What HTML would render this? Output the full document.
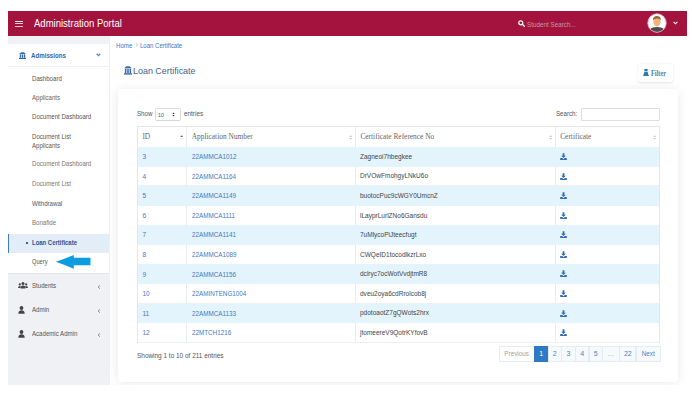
<!DOCTYPE html>
<html><head><meta charset="utf-8">
<style>
*{box-sizing:border-box;margin:0;padding:0}
html,body{width:692px;height:401px;overflow:hidden;background:#fff;position:relative;font-family:"Liberation Sans",sans-serif}
.a{position:absolute;white-space:nowrap}
.sx{transform-origin:0 0;display:inline-block}
#hdr{left:8px;top:11px;width:679px;height:25.4px;background:#a3133e}
#sb{left:8px;top:36px;width:101.5px;height:348.5px;background:#eff1f5}
.sbw{position:absolute;left:0;width:101.5px;background:#fff}
.sub{position:absolute;left:23.7px;font-size:7px;color:#4a4a4a;line-height:8px}
.clip{left:109.5px;top:36px;width:577.5px;height:348.7px;overflow:hidden}
.card{left:8.8px;top:53px;width:559.9px;height:292.5px;background:#fff;border-radius:4px;box-shadow:0 1px 12px rgba(0,0,0,0.09)}
.th{position:absolute;font-family:"Liberation Serif",serif;font-size:7.4px;color:#666;line-height:8px}
.td{position:absolute;font-size:6.5px;line-height:8px}
.pg{position:absolute;top:346.3px;height:15.3px;border:0.6px solid #e3ebf4;font-size:7px;color:#3a75c0;line-height:14px;text-align:center;overflow:hidden}
</style></head><body>
<!-- header -->
<div id="hdr" class="a">
  <div class="a" style="left:7.3px;top:10px;width:8px;height:1px;background:#f7e6eb"></div>
  <div class="a" style="left:7.3px;top:12px;width:8px;height:1px;background:#eccad4"></div>
  <div class="a" style="left:7.3px;top:15px;width:8px;height:1px;background:#eccad4"></div>
  <div class="a" style="left:25.8px;top:4.8px;font-size:11px;color:#fff;line-height:14px"><span class="sx" style="transform:scaleX(0.865)">Administration Portal</span></div>
  <svg class="a" style="left:509.5px;top:9px" width="7" height="7" viewBox="0 0 7 7"><circle cx="2.8" cy="2.8" r="2" fill="none" stroke="#fff" stroke-width="1.2"/><path d="M4.3 4.3L6.3 6.3" stroke="#fff" stroke-width="1.4" stroke-linecap="round"/></svg>
  <div class="a" style="left:519.2px;top:10px;font-size:7.5px;color:#c29aa8;line-height:8px"><span class="sx" style="transform:scaleX(0.84)">Student Search...</span></div>
  <svg class="a" style="left:639px;top:2.1px" width="20" height="20" viewBox="0 0 20 20">
    <defs><clipPath id="cc"><circle cx="10" cy="10" r="8.9"/></clipPath></defs>
    <circle cx="10" cy="10" r="9.2" fill="#fff" stroke="#e9b8c5" stroke-width="0.9"/>
    <g clip-path="url(#cc)">
      <ellipse cx="10" cy="17.6" rx="7.6" ry="3.6" fill="#4e4e4e"/>
      <ellipse cx="10" cy="8.8" rx="3.6" ry="4.6" fill="#f1b27c"/>
      <path d="M5.9 7.2Q5.8 3.3 9.8 3.1Q14 3.1 14 7Q13.2 5.6 10.4 5.4Q7.6 5.2 5.9 7.2Z" fill="#8d6c3c"/>
    </g>
  </svg>
  <svg class="a" style="left:665.3px;top:10.3px" width="5" height="4" viewBox="0 0 5 4"><path d="M0.6 0.9L2.5 2.8L4.4 0.9" fill="none" stroke="#fff" stroke-width="1.1"/></svg>
</div>

<!-- sidebar -->
<div id="sb" class="a">
  <div class="sbw" style="top:7.5px;height:23.3px;border-bottom:0.6px solid #eceef2"></div>
  <div class="sbw" style="top:30.8px;height:207.4px;border-bottom:0.8px solid #e3e6ec"></div>
  <!-- admissions -->
  <svg class="a" style="left:10.8px;top:15.8px" width="7" height="7" viewBox="0 0 8 8"><path d="M0.2 2.3L2 0.6Q4 -0.1 6 0.6L7.8 2.3Z" fill="#3465a5"/><rect x="0.9" y="2.7" width="1.5" height="3.9" fill="#3465a5"/><rect x="3.25" y="2.7" width="1.5" height="3.9" fill="#3465a5"/><rect x="5.6" y="2.7" width="1.5" height="3.9" fill="#3465a5"/><rect x="0" y="6.7" width="8" height="1.3" fill="#3465a5"/></svg>
  <div class="a" style="left:23.3px;top:15.5px;font-size:7px;font-weight:bold;color:#3465a5;line-height:8px"><span class="sx" style="transform:scaleX(0.88)">Admissions</span></div>
  <svg class="a" style="left:87.8px;top:17.2px" width="5" height="3.6" viewBox="0 0 5 3.6"><path d="M0.7 0.8L2.5 2.6L4.3 0.8" fill="none" stroke="#5b8cc6" stroke-width="1.3"/></svg>

  <div class="sub" style="top:38.6px;color:#555"><span class="sx" style="transform:scaleX(0.87)">Dashboard</span></div>
  <div class="sub" style="top:57.7px;color:#666"><span class="sx" style="transform:scaleX(0.87)">Applicants</span></div>
  <div class="sub" style="top:77px;color:#555"><span class="sx" style="transform:scaleX(0.87)">Document Dashboard</span></div>
  <div class="sub" style="top:97px;color:#555"><span class="sx" style="transform:scaleX(0.87)">Document List</span></div>
  <div class="sub" style="top:105.5px;color:#5a5a5a"><span class="sx" style="transform:scaleX(0.87)">Applicants</span></div>
  <div class="sub" style="top:124.1px;color:#777"><span class="sx" style="transform:scaleX(0.87)">Document Dashboard</span></div>
  <div class="sub" style="top:144.4px;color:#777"><span class="sx" style="transform:scaleX(0.87)">Document List</span></div>
  <div class="sub" style="top:164px;color:#555"><span class="sx" style="transform:scaleX(0.87)">Withdrawal</span></div>
  <div class="sub" style="top:183.1px;color:#777"><span class="sx" style="transform:scaleX(0.87)">Bonafide</span></div>
  <!-- active -->
  <div class="a" style="left:0;top:197.6px;width:101.5px;height:19.4px;background:#e3edf7;border-left:1.6px solid #3d7cc9"></div>
  <div class="a" style="left:17.9px;top:206.2px;width:2.1px;height:2.1px;background:#2a5590;border-radius:0.5px"></div>
  <div class="a" style="left:24.3px;top:202.6px;font-size:7px;font-weight:bold;color:#2a5590;line-height:8px"><span class="sx" style="transform:scaleX(0.85)">Loan Certificate</span></div>
  <div class="sub" style="top:222.3px;font-size:6.4px;color:#555"><span class="sx" style="transform:scaleX(0.89)">Query</span></div>
  <!-- arrow -->
  <svg class="a" style="left:47px;top:218px" width="36" height="16" viewBox="0 0 36 16"><path d="M0.8 7.8Q10 4.5 18.8 0.9V3.7H35.5V11.3H18.8V14.7Q10 11.1 0.8 7.8Z" fill="#0b9ddf"/></svg>

  <!-- bottom items -->
  <svg class="a" style="left:10.4px;top:246px" width="10" height="7" viewBox="0 0 10 7"><circle cx="5" cy="1.6" r="1.5" fill="#444"/><path d="M2.5 6.5Q2.5 3.6 5 3.6Q7.5 3.6 7.5 6.5Z" fill="#444"/><circle cx="1.8" cy="2.4" r="1.1" fill="#444"/><circle cx="8.2" cy="2.4" r="1.1" fill="#444"/><path d="M0 6Q0 4 1.8 4Q2.6 4 2.9 4.5L2.3 6Z" fill="#444"/><path d="M10 6Q10 4 8.2 4Q7.4 4 7.1 4.5L7.7 6Z" fill="#444"/></svg>
  <div class="sub" style="left:23.6px;top:246px;color:#555"><span class="sx" style="transform:scaleX(0.87)">Students</span></div>
  <svg class="a" style="left:89px;top:248.5px" width="4" height="4" viewBox="0 0 4 4"><path d="M3 0.3L1 2L3 3.7" fill="none" stroke="#8a8a8a" stroke-width="0.9"/></svg>

  <svg class="a" style="left:10.2px;top:269.6px" width="7" height="8" viewBox="0 0 7 8"><circle cx="3.5" cy="2" r="1.9" fill="#444"/><path d="M0.3 7.8Q0.3 4.3 3.5 4.3Q6.7 4.3 6.7 7.8Z" fill="#444"/></svg>
  <div class="sub" style="left:23.6px;top:270px;color:#555"><span class="sx" style="transform:scaleX(0.87)">Admin</span></div>
  <svg class="a" style="left:89px;top:272.5px" width="4" height="4" viewBox="0 0 4 4"><path d="M3 0.3L1 2L3 3.7" fill="none" stroke="#8a8a8a" stroke-width="0.9"/></svg>

  <svg class="a" style="left:10.2px;top:293.6px" width="7" height="8" viewBox="0 0 7 8"><circle cx="3.5" cy="2" r="1.9" fill="#444"/><path d="M0.3 7.8Q0.3 4.3 3.5 4.3Q6.7 4.3 6.7 7.8Z" fill="#444"/></svg>
  <div class="sub" style="left:23.6px;top:294px;color:#555"><span class="sx" style="transform:scaleX(0.87)">Academic Admin</span></div>
  <svg class="a" style="left:89px;top:296.5px" width="4" height="4" viewBox="0 0 4 4"><path d="M3 0.3L1 2L3 3.7" fill="none" stroke="#8a8a8a" stroke-width="0.9"/></svg>
</div>
<div class="a" style="left:109.4px;top:36px;width:0.8px;height:348.5px;background:#efefef"></div>

<!-- main -->
<div class="a" style="left:116.2px;top:41.5px;font-size:6.7px;color:#4577c0;line-height:8px"><span class="sx" style="transform:scaleX(0.92)">Home</span></div>
<svg class="a" style="left:135.5px;top:43.2px" width="2" height="4" viewBox="0 0 2 4"><path d="M0.4 0.4L1.5 2L0.4 3.6" fill="none" stroke="#aaa" stroke-width="0.7"/></svg>
<div class="a" style="left:139.6px;top:41.5px;font-size:6.7px;color:#4577c0;line-height:8px"><span class="sx" style="transform:scaleX(0.9)">Loan Certificate</span></div>
<svg class="a" style="left:124.3px;top:66.3px" width="8" height="8.6" viewBox="0 0 8 8.6"><path d="M0.2 2.3L2 0.6Q4 -0.1 6 0.6L7.8 2.3Z" fill="#3a67a3"/><rect x="0.9" y="2.7" width="1.5" height="4.4" fill="#3a67a3"/><rect x="3.25" y="2.7" width="1.5" height="4.4" fill="#3a67a3"/><rect x="5.6" y="2.7" width="1.5" height="4.4" fill="#3a67a3"/><rect x="0" y="7.2" width="8" height="1.4" fill="#3a67a3"/></svg>
<div class="a" style="left:132.6px;top:64.7px;font-size:9.6px;color:#3f5f8f;line-height:12px"><span class="sx" style="transform:scaleX(0.93)">Loan Certificate</span></div>

<!-- filter btn -->
<div class="a" style="left:637.8px;top:63.8px;width:35px;height:18px;background:#fff;border-radius:3px;box-shadow:0 0.5px 2.5px rgba(0,0,0,0.1)"></div>
<svg class="a" style="left:643.4px;top:69px" width="6" height="7" viewBox="0 0 6 7"><rect x="1.4" y="0" width="3.2" height="2.4" fill="#2b7aa3"/><path d="M1.4 2.9H4.6L5.9 6.9H0.1Z" fill="#2b7aa3"/></svg>
<div class="a" style="left:651px;top:69.8px;font-family:'Liberation Serif',serif;font-size:7.2px;font-weight:bold;color:#3a86ad;line-height:8px"><span class="sx" style="transform:scaleX(0.87)">Filter</span></div>

<!-- card -->
<div class="a clip"><div class="a card"></div></div>
<div class="a" style="left:137.2px;top:109.8px;font-size:7px;color:#555;line-height:8px"><span class="sx" style="transform:scaleX(0.88)">Show</span></div>
<div class="a" style="left:155.4px;top:108px;width:25.3px;height:12.5px;border:0.6px solid #d9d9d9;border-radius:1.5px"></div>
<div class="a" style="left:158.3px;top:111px;font-size:6.2px;color:#555;line-height:8px"><span class="sx" style="transform:scaleX(0.85)">10</span></div>
<svg class="a" style="left:172px;top:111.8px" width="3" height="5" viewBox="0 0 3 5"><path d="M0.3 2.1L1.5 0.5L2.7 2.1Z M0.3 2.9L1.5 4.5L2.7 2.9Z" fill="#333"/></svg>
<div class="a" style="left:183.6px;top:109.8px;font-size:7px;color:#555;line-height:8px"><span class="sx" style="transform:scaleX(0.91)">entries</span></div>
<div class="a" style="left:556.2px;top:110px;font-size:7px;color:#555;line-height:8px"><span class="sx" style="transform:scaleX(0.88)">Search:</span></div>
<div class="a" style="left:581px;top:108.4px;width:79px;height:12.3px;border:0.7px solid #dcdee1;border-radius:1px"></div>

<!-- table -->
<div class="a" id="tbl" style="left:137px;top:126px;width:522.5px;height:217px;border:0.7px solid #e4e7ea"></div>
<div class="a" style="left:137px;top:146.60px;width:522.5px;height:0.8px;background:#e2e5e8"></div>
<div class="a" style="left:186.00px;top:126.0px;width:0.7px;height:216.4px;background:#e8ebee"></div>
<div class="a" style="left:355.00px;top:126.0px;width:0.7px;height:216.4px;background:#e8ebee"></div>
<div class="a" style="left:555.00px;top:126.0px;width:0.7px;height:216.4px;background:#e8ebee"></div>
<div class="th" style="left:142.4px;top:133.00px">ID</div>
<div class="th" style="left:191.7px;top:133.00px">Application Number</div>
<div class="th" style="left:360.4px;top:133.00px">Certificate Reference No</div>
<div class="th" style="left:560.2px;top:133.00px">Certificate</div>
<svg class="a" style="left:179.80px;top:135.00px" width="3.4" height="5" viewBox="0 0 3.4 5"><path d="M0 2L1.7 0.2L3.4 2Z" fill="#777"/><path d="M0 3L1.7 4.8L3.4 3Z" fill="#e6e6e6"/></svg>
<svg class="a" style="left:348.80px;top:135.00px" width="3.4" height="5" viewBox="0 0 3.4 5"><path d="M0 2L1.7 0.2L3.4 2Z" fill="#cfcfcf"/><path d="M0 3L1.7 4.8L3.4 3Z" fill="#cfcfcf"/></svg>
<svg class="a" style="left:548.80px;top:135.00px" width="3.4" height="5" viewBox="0 0 3.4 5"><path d="M0 2L1.7 0.2L3.4 2Z" fill="#cfcfcf"/><path d="M0 3L1.7 4.8L3.4 3Z" fill="#cfcfcf"/></svg>
<svg class="a" style="left:653.30px;top:135.00px" width="3.4" height="5" viewBox="0 0 3.4 5"><path d="M0 2L1.7 0.2L3.4 2Z" fill="#cfcfcf"/><path d="M0 3L1.7 4.8L3.4 3Z" fill="#cfcfcf"/></svg>
<div class="a" style="left:137.7px;top:147.00px;width:521.2px;height:19.58px;background:#e3f4fc"></div>
<div class="td" style="left:142.4px;top:153.10px;color:#4677c0">3</div>
<div class="td" style="left:191.8px;top:153.10px;color:#4677c0"><span class="sx" style="transform:scaleX(0.97)">22AMMCA1012</span></div>
<div class="td" style="left:360.3px;top:152.80px;color:#444;font-size:7px"><span class="sx" style="transform:scaleX(0.93)">Zagneoi7hbegkee</span></div>
<svg class="a" style="left:560px;top:153.00px" width="7" height="7" viewBox="0 0 7 7"><path d="M2.6 0.2H4.4V2.8H5.8L3.5 5.1L1.2 2.8H2.6Z" fill="#2f6ab8"/><path d="M0.2 5H2.2L3.5 6.2L4.8 5H6.8V6.9H0.2Z" fill="#2f6ab8"/></svg>
<div class="a" style="left:137.7px;top:185.46px;width:521.2px;height:0.5px;background:#edf0f3"></div>
<div class="td" style="left:142.4px;top:172.68px;color:#4677c0">4</div>
<div class="td" style="left:191.8px;top:172.68px;color:#4677c0"><span class="sx" style="transform:scaleX(0.97)">22AMMCA1164</span></div>
<div class="td" style="left:360.3px;top:172.38px;color:#444;font-size:7px"><span class="sx" style="transform:scaleX(0.93)">DrVOwFmohgyLNkU6o</span></div>
<svg class="a" style="left:560px;top:172.58px" width="7" height="7" viewBox="0 0 7 7"><path d="M2.6 0.2H4.4V2.8H5.8L3.5 5.1L1.2 2.8H2.6Z" fill="#2f6ab8"/><path d="M0.2 5H2.2L3.5 6.2L4.8 5H6.8V6.9H0.2Z" fill="#2f6ab8"/></svg>
<div class="a" style="left:137.7px;top:186.16px;width:521.2px;height:19.58px;background:#e3f4fc"></div>
<div class="td" style="left:142.4px;top:192.26px;color:#4677c0">5</div>
<div class="td" style="left:191.8px;top:192.26px;color:#4677c0"><span class="sx" style="transform:scaleX(0.97)">22AMMCA1149</span></div>
<div class="td" style="left:360.3px;top:191.96px;color:#444;font-size:7px"><span class="sx" style="transform:scaleX(0.93)">buotocPuc9cWGY0UmcnZ</span></div>
<svg class="a" style="left:560px;top:192.16px" width="7" height="7" viewBox="0 0 7 7"><path d="M2.6 0.2H4.4V2.8H5.8L3.5 5.1L1.2 2.8H2.6Z" fill="#2f6ab8"/><path d="M0.2 5H2.2L3.5 6.2L4.8 5H6.8V6.9H0.2Z" fill="#2f6ab8"/></svg>
<div class="a" style="left:137.7px;top:224.62px;width:521.2px;height:0.5px;background:#edf0f3"></div>
<div class="td" style="left:142.4px;top:211.84px;color:#4677c0">6</div>
<div class="td" style="left:191.8px;top:211.84px;color:#4677c0"><span class="sx" style="transform:scaleX(0.97)">22AMMCA1111</span></div>
<div class="td" style="left:360.3px;top:211.54px;color:#444;font-size:7px"><span class="sx" style="transform:scaleX(0.93)">lLayprLurlZNo6Gansdu</span></div>
<svg class="a" style="left:560px;top:211.74px" width="7" height="7" viewBox="0 0 7 7"><path d="M2.6 0.2H4.4V2.8H5.8L3.5 5.1L1.2 2.8H2.6Z" fill="#2f6ab8"/><path d="M0.2 5H2.2L3.5 6.2L4.8 5H6.8V6.9H0.2Z" fill="#2f6ab8"/></svg>
<div class="a" style="left:137.7px;top:225.32px;width:521.2px;height:19.58px;background:#e3f4fc"></div>
<div class="td" style="left:142.4px;top:231.42px;color:#4677c0">7</div>
<div class="td" style="left:191.8px;top:231.42px;color:#4677c0"><span class="sx" style="transform:scaleX(0.97)">22AMMCA1141</span></div>
<div class="td" style="left:360.3px;top:231.12px;color:#444;font-size:7px"><span class="sx" style="transform:scaleX(0.93)">7uMlycoPiJteecfugt</span></div>
<svg class="a" style="left:560px;top:231.32px" width="7" height="7" viewBox="0 0 7 7"><path d="M2.6 0.2H4.4V2.8H5.8L3.5 5.1L1.2 2.8H2.6Z" fill="#2f6ab8"/><path d="M0.2 5H2.2L3.5 6.2L4.8 5H6.8V6.9H0.2Z" fill="#2f6ab8"/></svg>
<div class="a" style="left:137.7px;top:263.78px;width:521.2px;height:0.5px;background:#edf0f3"></div>
<div class="td" style="left:142.4px;top:251.00px;color:#4677c0">8</div>
<div class="td" style="left:191.8px;top:251.00px;color:#4677c0"><span class="sx" style="transform:scaleX(0.97)">22AMMCA1089</span></div>
<div class="td" style="left:360.3px;top:250.70px;color:#444;font-size:7px"><span class="sx" style="transform:scaleX(0.93)">CWQeID1tocodlkzrLxo</span></div>
<svg class="a" style="left:560px;top:250.90px" width="7" height="7" viewBox="0 0 7 7"><path d="M2.6 0.2H4.4V2.8H5.8L3.5 5.1L1.2 2.8H2.6Z" fill="#2f6ab8"/><path d="M0.2 5H2.2L3.5 6.2L4.8 5H6.8V6.9H0.2Z" fill="#2f6ab8"/></svg>
<div class="a" style="left:137.7px;top:264.48px;width:521.2px;height:19.58px;background:#e3f4fc"></div>
<div class="td" style="left:142.4px;top:270.58px;color:#4677c0">9</div>
<div class="td" style="left:191.8px;top:270.58px;color:#4677c0"><span class="sx" style="transform:scaleX(0.97)">22AMMCA1156</span></div>
<div class="td" style="left:360.3px;top:270.28px;color:#444;font-size:7px"><span class="sx" style="transform:scaleX(0.93)">dclryc7ocWotVvdjtmR8</span></div>
<svg class="a" style="left:560px;top:270.48px" width="7" height="7" viewBox="0 0 7 7"><path d="M2.6 0.2H4.4V2.8H5.8L3.5 5.1L1.2 2.8H2.6Z" fill="#2f6ab8"/><path d="M0.2 5H2.2L3.5 6.2L4.8 5H6.8V6.9H0.2Z" fill="#2f6ab8"/></svg>
<div class="a" style="left:137.7px;top:302.94px;width:521.2px;height:0.5px;background:#edf0f3"></div>
<div class="td" style="left:142.4px;top:290.16px;color:#4677c0">10</div>
<div class="td" style="left:191.8px;top:290.16px;color:#4677c0"><span class="sx" style="transform:scaleX(0.97)">22AMINTENG1004</span></div>
<div class="td" style="left:360.3px;top:289.86px;color:#444;font-size:7px"><span class="sx" style="transform:scaleX(0.93)">dveu2oya6cdRrolcob8j</span></div>
<svg class="a" style="left:560px;top:290.06px" width="7" height="7" viewBox="0 0 7 7"><path d="M2.6 0.2H4.4V2.8H5.8L3.5 5.1L1.2 2.8H2.6Z" fill="#2f6ab8"/><path d="M0.2 5H2.2L3.5 6.2L4.8 5H6.8V6.9H0.2Z" fill="#2f6ab8"/></svg>
<div class="a" style="left:137.7px;top:303.64px;width:521.2px;height:19.58px;background:#e3f4fc"></div>
<div class="td" style="left:142.4px;top:309.74px;color:#4677c0">11</div>
<div class="td" style="left:191.8px;top:309.74px;color:#4677c0"><span class="sx" style="transform:scaleX(0.97)">22AMMCA1133</span></div>
<div class="td" style="left:360.3px;top:309.44px;color:#444;font-size:7px"><span class="sx" style="transform:scaleX(0.93)">pdotoaotZ7gQWots2hrx</span></div>
<svg class="a" style="left:560px;top:309.64px" width="7" height="7" viewBox="0 0 7 7"><path d="M2.6 0.2H4.4V2.8H5.8L3.5 5.1L1.2 2.8H2.6Z" fill="#2f6ab8"/><path d="M0.2 5H2.2L3.5 6.2L4.8 5H6.8V6.9H0.2Z" fill="#2f6ab8"/></svg>
<div class="a" style="left:137.7px;top:342.10px;width:521.2px;height:0.5px;background:#edf0f3"></div>
<div class="td" style="left:142.4px;top:329.32px;color:#4677c0">12</div>
<div class="td" style="left:191.8px;top:329.32px;color:#4677c0"><span class="sx" style="transform:scaleX(0.97)">22MTCH1216</span></div>
<div class="td" style="left:360.3px;top:329.02px;color:#444;font-size:7px"><span class="sx" style="transform:scaleX(0.93)">jtomeereV9QotrKYfovB</span></div>
<svg class="a" style="left:560px;top:329.22px" width="7" height="7" viewBox="0 0 7 7"><path d="M2.6 0.2H4.4V2.8H5.8L3.5 5.1L1.2 2.8H2.6Z" fill="#2f6ab8"/><path d="M0.2 5H2.2L3.5 6.2L4.8 5H6.8V6.9H0.2Z" fill="#2f6ab8"/></svg>
<div class="a" style="left:136.8px;top:351.5px;font-size:7px;color:#555;line-height:8px"><span class="sx" style="transform:scaleX(0.92)">Showing 1 to 10 of 211 entries</span></div>
<div class="pg" style="left:499.3px;width:35.50px;background:#fff;color:#a0a0a0"><span class="sx" style="transform:scaleX(0.9);transform-origin:50% 0">Previous</span></div>
<div class="pg" style="left:534.2px;width:14.10px;background:#2f7ac4;border-color:#2f7ac4;color:#fff">1</div>
<div class="pg" style="left:547.7px;width:14.10px;background:#f7fafd;color:#4a80c4">2</div>
<div class="pg" style="left:561.2px;width:14.40px;background:#f7fafd;color:#4a80c4">3</div>
<div class="pg" style="left:575px;width:14.40px;background:#f7fafd;color:#4a80c4">4</div>
<div class="pg" style="left:588.8px;width:13.80px;background:#f7fafd;color:#4a80c4">5</div>
<div class="pg" style="left:602px;width:18.00px;background:#f7fafd;color:#a0a0a0">…</div>
<div class="pg" style="left:619.4px;width:16.80px;background:#f7fafd;color:#4a80c4">22</div>
<div class="pg" style="left:635.6px;width:25.00px;background:#f7fafd;color:#4a80c4"><span class="sx" style="transform:scaleX(0.9);transform-origin:50% 0">Next</span></div>
</body></html>
